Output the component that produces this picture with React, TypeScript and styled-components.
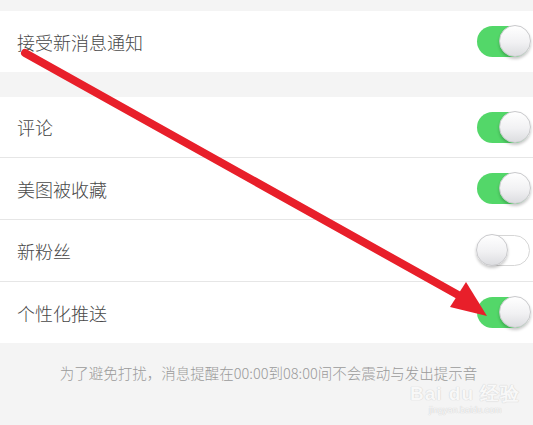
import React from 'react';
import styled, { createGlobalStyle, css } from 'styled-components';

const GlobalStyle = createGlobalStyle`
    html, body {
        margin: 0;
        padding: 0;
        background: #f4f4f4;
    }
    * {
        box-sizing: border-box;
    }
`

const Page = styled.div`
    position: relative;
    width: 533px;
    height: 425px;
    overflow: hidden;
    background: #f4f4f4;
    padding-top: 11px;
    font-family: "Noto Sans CJK SC", "Noto Sans", sans-serif;
    display: flex;
    flex-direction: column;
`

const Section = styled.div`
    background: #fff;
    display: flex;
    flex-direction: column;
    margin-bottom: ${(props: { gapAfter: number }) => props.gapAfter}px;
`

const Row = styled.div`
    height: ${(props: { h: number }) => props.h}px;
    display: flex;
    align-items: center;
    justify-content: space-between;
    padding: 0 3px 0 17px;
    & + & {
        border-top: 1px solid #e6e6e6;
    }
`

const Label = styled.span`
    font-size: 18px;
    font-weight: 300;
    color: #484848;
`

const Track = styled.div`
    position: relative;
    width: 53px;
    height: 31px;
    border-radius: 16px;
    ${(props: { on: boolean }) => props.on
        ? css`
            background: #53d769;
        `
        : css`
            background: #fff;
            border: 1px solid #d6d6d6;
        `}
`

const Knob = styled.div`
    position: absolute;
    top: ${(props: { on: boolean }) => props.on ? -1 : -2}px;
    ${(props: { on: boolean }) => props.on ? css`right: -1px;` : css`left: -2px;`}
    width: 32px;
    height: 32px;
    border-radius: 50%;
    background: linear-gradient(180deg, #ffffff 0%, #f1f1f3 55%, #dcdde0 100%);
    border: 1px solid #c9c9cc;
    box-shadow: 0 2px 3px rgba(0, 0, 0, 0.22);
`

const Note = styled.div`
    padding-top: 19px;
    padding-left: 4px;
    text-align: center;
    font-size: 14.5px;
    font-weight: 300;
    line-height: 22px;
    color: #9a9a9a;
`

const Watermark = styled.div`
    position: absolute;
    left: 410px;
    top: 385px;
    display: flex;
    flex-direction: column;
    align-items: center;
    color: #f8f8f8;
    font-family: "Liberation Sans", Arial, sans-serif;
    text-shadow: 0 0 1px #d2d2d2, 0 0 1px #d2d2d2;
    pointer-events: none;
`

const MarkTop = styled.div`
    font-size: 19px;
    font-weight: bold;
    line-height: 17px;
    letter-spacing: 1px;
`

const MarkBottom = styled.div`
    font-size: 9px;
    line-height: 12px;
    margin-top: 2px;
`

const ArrowLayer = styled.svg`
    position: absolute;
    left: 0;
    top: 0;
    pointer-events: none;
`

const Toggle: React.FC<{ on: boolean }> = ({ on }) => (
    <Track on={on}>
        <Knob on={on} />
    </Track>
)

const items = [
    { title: '评论', on: true, h: 60 },
    { title: '美图被收藏', on: true, h: 62 },
    { title: '新粉丝', on: false, h: 62 },
    { title: '个性化推送', on: true, h: 62 },
]

const App: React.FC = () => {
    return <Page>
        <GlobalStyle />
        <Section gapAfter={25}>
            <Row h={61}>
                <Label>接受新消息通知</Label>
                <Toggle on={true} />
            </Row>
        </Section>
        <Section gapAfter={0}>
            {items.map((item, i) => (
                <Row key={i} h={item.h}>
                    <Label>{item.title}</Label>
                    <Toggle on={item.on} />
                </Row>
            ))}
        </Section>
        <Note>为了避免打扰，消息提醒在00:00到08:00间不会震动与发出提示音</Note>
        <Watermark>
            <MarkTop>Bai du 经验</MarkTop>
            <MarkBottom>jingyan.baidu.com</MarkBottom>
        </Watermark>
        <ArrowLayer width={533} height={425} viewBox="0 0 533 425">
            <line x1={25} y1={53} x2={460} y2={296} stroke="#e81f2a" strokeWidth={8} strokeLinecap="round" />
            <polygon points="450,307 466,282 487,316" fill="#e81f2a" />
        </ArrowLayer>
    </Page>
}

export default App;
